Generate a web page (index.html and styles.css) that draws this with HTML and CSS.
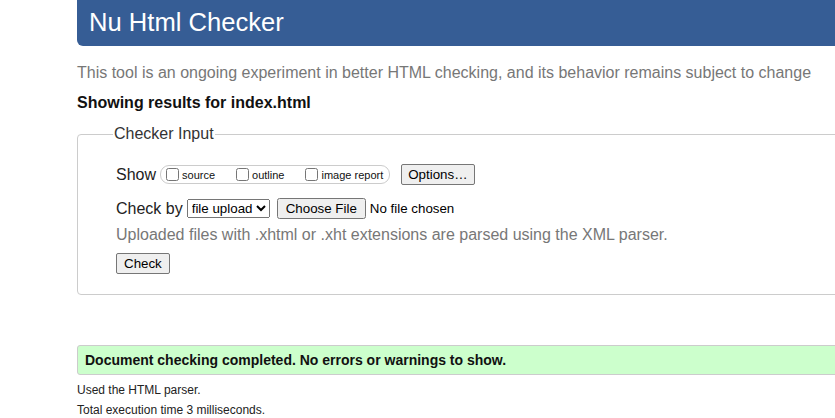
FILE: index.html
```html
<!DOCTYPE html>
<html>
<head>
<meta charset="utf-8">
<title>Nu Html Checker</title>
<link rel="stylesheet" href="styles.css">
</head>
<body>
<div class="page">
  <header class="banner"><h1 class="title">Nu Html Checker</h1></header>
  <p class="intro">This tool is an ongoing experiment in better HTML checking, and its behavior remains subject to change</p>
  <p class="showing">Showing results for index.html</p>
  <fieldset class="checker">
    <legend class="legend">Checker Input</legend>
    <div class="row row-show">
      <span class="label">Show</span>
      <span class="opts">
        <label class="opt"><input type="checkbox" class="cb">source</label>
        <label class="opt"><input type="checkbox" class="cb">outline</label>
        <label class="opt"><input type="checkbox" class="cb">image report</label>
      </span>
      <button class="btn btn-options" type="button">Options…</button>
    </div>
    <div class="row row-check">
      <span class="label">Check by</span>
      <select class="select"><option>file upload</option></select>
      <input type="file" class="file">
    </div>
    <p class="hint">Uploaded files with .xhtml or .xht extensions are parsed using the XML parser.</p>
    <div class="row row-submit"><button class="btn btn-check" type="button">Check</button></div>
  </fieldset>
  <p class="success">Document checking completed. No errors or warnings to show.</p>
  <p class="meta">Used the HTML parser.</p>
  <p class="meta">Total execution time 3 milliseconds.</p>
</div>
</body>
</html>
```
FILE: styles.css
```css
html, body {
  margin: 0;
  padding: 0;
  background: #fff;
  overflow: hidden;
}
body {
  font-family: "Liberation Sans", Arial, sans-serif;
  color: #000;
}
.page {
  margin-left: 77px;
  width: 900px;
}
.banner {
  background: #365d95;
  height: 46px;
  border-radius: 0 0 6px 6px;
  padding-left: 12px;
}
.title {
  margin: 0;
  font-weight: normal;
  font-size: 25.6px;
  line-height: 44px;
  color: #fff;
}
.intro {
  margin: 17px 0 0;
  font-size: 16px;
  line-height: 20px;
  color: #777;
}
.showing {
  margin: 10px 0 0;
  font-size: 16px;
  line-height: 20px;
  font-weight: bold;
  color: #111;
}
.checker {
  margin: 12px 0 0;
  border: 1px solid #ccc;
  border-radius: 4px;
  padding: 21px 38px 20px;
  min-width: 0;
}
.legend {
  font-size: 16px;
  color: #333;
  padding: 0 1px;
  margin-left: -3px;
}
.row {
  display: flex;
  align-items: center;
}
.label {
  font-size: 16px;
  color: #222;
}
.opts {
  display: inline-flex;
  align-items: center;
  margin-left: 4px;
  border: 1px solid #ccc;
  border-radius: 9px;
  height: 17px;
  padding: 0 6px 0 5px;
}
.opt {
  display: inline-flex;
  align-items: center;
  font-size: 11px;
  color: #111;
  margin-right: 21px;
}
.opt:last-child {
  margin-right: 0;
}
.cb {
  margin: 0 3px 0 0;
  width: 13px;
  height: 13px;
}
.btn {
  font-family: "Liberation Sans", Arial, sans-serif;
  font-size: 13.33px;
  color: #000;
  background: #efefef;
  border: 1px solid #767676;
  border-radius: 2px;
  padding: 1px 6px;
  height: 21px;
}
.btn-options {
  margin-left: 11px;
}
.btn-check {
  padding: 1px 7px;
}
.row-check {
  margin-top: 13px;
}
.select {
  font-family: "Liberation Sans", Arial, sans-serif;
  font-size: 13.33px;
  margin-left: 4px;
  height: 19px;
  padding: 0;
}
.file {
  font-family: "Liberation Sans", Arial, sans-serif;
  font-size: 13.33px;
  margin-left: 7px;
}
.file::file-selector-button {
  font-family: "Liberation Sans", Arial, sans-serif;
  font-size: 13.33px;
  padding: 1px 7px;
  margin-right: 4px;
  height: 21px;
}
.hint {
  margin: 6px 0 0;
  font-size: 16px;
  line-height: 20px;
  color: #777;
}
.row-submit {
  margin-top: 8px;
}
.success {
  margin: 50px 0 0;
  background: #ccffcc;
  border: 1px solid #ccc;
  border-radius: 3px;
  padding: 6px 7px;
  font-size: 14px;
  line-height: 16px;
  font-weight: bold;
  color: #111;
}
.meta {
  margin: 8px 0 0;
  font-size: 12px;
  line-height: 14px;
  color: #222;
}
.meta + .meta {
  margin-top: 6px;
}
```
